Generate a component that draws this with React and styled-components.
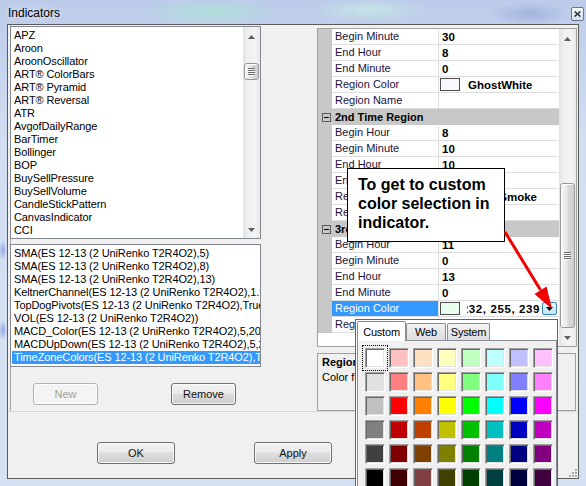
import React from 'react'
import styled, { createGlobalStyle, css } from 'styled-components'

const UI_FONT = `"Liberation Sans", Arial, sans-serif`

const GlobalStyle = createGlobalStyle`
  html, body { margin: 0; padding: 0; background: #ffffff; }
  body { font-family: ${UI_FONT}; font-size: 11px; color: #000; }
  *, *::before, *::after { box-sizing: border-box; }
`

const indicators = [
  'APZ', 'Aroon', 'AroonOscillator', 'ART® ColorBars', 'ART® Pyramid', 'ART® Reversal',
  'ATR', 'AvgofDailyRange', 'BarTimer', 'Bollinger', 'BOP', 'BuySellPressure',
  'BuySellVolume', 'CandleStickPattern', 'CanvasIndicator', 'CCI',
]

const applied = [
  'SMA(ES 12-13 (2 UniRenko T2R4O2),5)',
  'SMA(ES 12-13 (2 UniRenko T2R4O2),8)',
  'SMA(ES 12-13 (2 UniRenko T2R4O2),13)',
  'KeltnerChannel(ES 12-13 (2 UniRenko T2R4O2),1.5,20)',
  'TopDogPivots(ES 12-13 (2 UniRenko T2R4O2),True)',
  'VOL(ES 12-13 (2 UniRenko T2R4O2))',
  'MACD_Color(ES 12-13 (2 UniRenko T2R4O2),5,20,30)',
  'MACDUpDown(ES 12-13 (2 UniRenko T2R4O2),5,20,30)',
  'TimeZoneColors(ES 12-13 (2 UniRenko T2R4O2),True)',
]

const properties = [
  { name: 'Begin Minute', value: '30' },
  { name: 'End Hour', value: '8' },
  { name: 'End Minute', value: '0' },
  { name: 'Region Color', color: '#f8f8ff', value: 'GhostWhite' },
  { name: 'Region Name', value: '' },
  { category: '2nd Time Region' },
  { name: 'Begin Hour', value: '8' },
  { name: 'Begin Minute', value: '10' },
  { name: 'End Hour', value: '10' },
  { name: 'End Minute', value: '30' },
  { name: 'Region Color', color: '#f5f5f5', value: 'WhiteSmoke' },
  { name: 'Region Name', value: '' },
  { category: '3rd Time Region' },
  { name: 'Begin Hour', value: '11' },
  { name: 'Begin Minute', value: '0' },
  { name: 'End Hour', value: '13' },
  { name: 'End Minute', value: '0' },
  { name: 'Region Color', color: 'rgb(232, 255, 239)', value: '232, 255, 239', selected: true },
  { name: 'Region Name', value: '' },
]

const palette = [
  ['#ffffff', '#ffc0c0', '#ffe0c0', '#ffffc0', '#c0ffc0', '#c0ffff', '#c0c0ff', '#ffc0ff'],
  ['#e0e0e0', '#ff8080', '#ffc080', '#ffff80', '#80ff80', '#80ffff', '#8080ff', '#ff80ff'],
  ['#c0c0c0', '#ff0000', '#ff8000', '#ffff00', '#00ff00', '#00ffff', '#0000ff', '#ff00ff'],
  ['#808080', '#c00000', '#c04000', '#c0c000', '#00c000', '#00c0c0', '#0000c0', '#c000c0'],
  ['#404040', '#800000', '#804000', '#808000', '#008000', '#008080', '#000080', '#800080'],
  ['#000000', '#400000', '#804040', '#404000', '#004000', '#004040', '#000040', '#400040'],
]

function App() {
  return (
    <>
      <GlobalStyle />
      <Window>
        <TitleBar>
          <Title>Indicators</Title>
          <CloseBox>
            <svg width="7" height="6" viewBox="0 0 7 6">
              <path d="M0.5 0.5 L6.5 5.5 M6.5 0.5 L0.5 5.5" stroke="#2b3445" strokeWidth="1.6" />
            </svg>
          </CloseBox>
        </TitleBar>

        <Client>
          <Body>
            <LeftPane>
              <ListBox $height={213}>
                <ListItems>
                  {indicators.map(name => <ListItem key={name}>{name}</ListItem>)}
                </ListItems>
                <VScroll thumbTop={19} thumbSize={17} />
              </ListBox>
              <ListBox $height={123} $gap={5}>
                <ListItems>
                  {applied.map((name, i) => (
                    <ListItem key={name} $selected={i === applied.length - 1}>{name}</ListItem>
                  ))}
                </ListItems>
              </ListBox>
              <ButtonRow>
                <Button $w={65} disabled>New</Button>
                <Button $w={65}>Remove</Button>
              </ButtonRow>
            </LeftPane>

            <RightPane>
              <Grid>
                <GridRows>
                  {properties.map((p, i) => p.category ? (
                    <CategoryRow key={i}>
                      <Expander><MinusBar /></Expander>
                      <CategoryLabel>{p.category}</CategoryLabel>
                    </CategoryRow>
                  ) : (
                    <PropRow key={i}>
                      <Gutter />
                      <NameCell $selected={p.selected}>{p.name}</NameCell>
                      <ValueCell $swatch={!!p.color}>
                        {p.color && <Swatch $color={p.color} />}
                        {p.selected ? (
                          <>
                            <EditBox><span>{p.value}</span></EditBox>
                            <DropButton>
                              <svg width="7" height="4" viewBox="0 0 7 4"><path d="M0 0 H7 L3.5 4 Z" fill="#000" /></svg>
                            </DropButton>
                          </>
                        ) : p.color ? (
                          <ValueText>{p.value}</ValueText>
                        ) : p.value}
                      </ValueCell>
                    </PropRow>
                  ))}
                </GridRows>
                <VScroll thumbTop={137} thumbSize={145} />
              </Grid>
              <DescPanel>
                <DescTitle>Region Color</DescTitle>
                <DescText>Color for the 3rd time region.</DescText>
              </DescPanel>
            </RightPane>
          </Body>

          <Footer>
            <Button $w={78}>OK</Button>
            <Button $w={78}>Apply</Button>
            <Grip>
              <svg width="11" height="11" viewBox="0 0 11 11">
                {[[8, 2], [8, 5], [5, 5], [8, 8], [5, 8], [2, 8]].map(([x, y]) => (
                  <g key={`${x}-${y}`}>
                    <rect x={x + 1} y={y + 1} width="2" height="2" fill="#ffffff" />
                    <rect x={x} y={y} width="2" height="2" fill="#a8a8a8" />
                  </g>
                ))}
              </svg>
            </Grip>
          </Footer>
        </Client>

        <Callout>
          To get to custom<br />color selection in<br />indicator.
        </Callout>
        <Arrow width="62" height="90" viewBox="0 0 62 90">
          <line x1="5" y1="7" x2="40.5" y2="65" stroke="#f20000" strokeWidth="3" />
          <polygon points="52,84 34.5,68.9 46.5,61.6" fill="#f20000" />
        </Arrow>

        <ColorDropdown>
          <TabStrip>
            <Tab $w={49} $active>Custom</Tab>
            <Tab $w={40}>Web</Tab>
            <Tab $w={43} $gap={1}>System</Tab>
          </TabStrip>
          <TabPanel>
            <SwatchGrid>
              {palette.flat().map((c, i) => (
                <ColorCell key={i} $color={c} $focused={i === 0} />
              ))}
            </SwatchGrid>
          </TabPanel>
        </ColorDropdown>
      </Window>
    </>
  )
}

function VScroll({ thumbTop, thumbSize }) {
  return (
    <ScrollBar>
      <ScrollButton $up>
        <svg width="7" height="4" viewBox="0 0 7 4"><path d="M0 4 L3.5 0 L7 4 Z" fill="#5e5e5e" /></svg>
      </ScrollButton>
      <ScrollLane>
        <Thumb $top={thumbTop} $size={thumbSize}>
          <svg width="7" height="8" viewBox="0 0 7 8">
            {[0, 2, 4, 6].map(y => (
              <g key={y}>
                <rect x="0" y={y} width="7" height="1" fill="#6a6a6a" />
                <rect x="0" y={y + 1} width="7" height="1" fill="#fbfbfb" />
              </g>
            ))}
          </svg>
        </Thumb>
      </ScrollLane>
      <ScrollButton>
        <svg width="7" height="4" viewBox="0 0 7 4"><path d="M0 0 H7 L3.5 4 Z" fill="#5e5e5e" /></svg>
      </ScrollButton>
    </ScrollBar>
  )
}

export default App

const Window = styled.div`
  position: relative;
  width: 586px;
  height: 486px;
  overflow: hidden;
  display: flex;
  flex-direction: column;
  padding: 0 7px 7px;
  background:
    radial-gradient(ellipse 70px 14px at 210px 12px, rgba(170, 228, 214, 0.75), transparent),
    radial-gradient(ellipse 60px 12px at 370px 10px, rgba(200, 238, 230, 0.7), transparent),
    radial-gradient(ellipse 40px 12px at 530px 14px, rgba(140, 160, 215, 0.55), transparent),
    radial-gradient(ellipse 4px 10px at 3px 250px, rgba(110, 130, 225, 0.6), transparent),
    radial-gradient(ellipse 4px 10px at 3px 330px, rgba(110, 130, 225, 0.6), transparent),
    linear-gradient(180deg, #bccbe9 0%, #d2dff2 30%, #d4e1f3 100%);
`

const TitleBar = styled.div`
  height: 24px;
  flex: none;
  display: flex;
  align-items: flex-start;
  justify-content: space-between;
  padding-left: 1px;
`

const Title = styled.span`
  margin-top: 6px;
  font-size: 12px;
  line-height: 14px;
  color: #000;
  text-shadow: 0 0 6px rgba(255, 255, 255, 0.9);
`

const CloseBox = styled.div`
  width: 13px;
  height: 14px;
  margin: 7px -5px 0 0;
  border: 1px solid #67758c;
  border-radius: 2px;
  background: linear-gradient(#f8fafd, #d5dfeb);
  display: flex;
  align-items: center;
  justify-content: center;
`

const Client = styled.div`
  flex: 1;
  display: flex;
  flex-direction: column;
  border: 1px solid #5a5a5a;
  background: #f0f0f0;
`

const Body = styled.div`
  flex: none;
  height: 386px;
  display: flex;
  padding-left: 2px;
`

const LeftPane = styled.div`
  width: 307px;
  flex: none;
  display: flex;
  flex-direction: column;
  padding-top: 1px;
  box-shadow: inset 1px 0 0 #a8a8a8;
`

const ListBox = styled.div`
  width: 251px;
  height: ${p => p.$height}px;
  margin-top: ${p => p.$gap || 0}px;
  flex: none;
  display: flex;
  border: 1px solid #828790;
  background: #fff;
  overflow: hidden;
`

const ListItems = styled.div`
  flex: 1;
  min-width: 0;
  padding-top: 2px;
`

const ListItem = styled.div`
  height: 13px;
  line-height: 13px;
  margin-left: 1px;
  padding-left: 2px;
  white-space: nowrap;
  overflow: hidden;
  letter-spacing: -0.1px;
  ${p => p.$selected && css`
    background: #3399ff;
    color: #fff;
  `}
`

const ScrollBar = styled.div`
  width: 17px;
  flex: none;
  display: flex;
  flex-direction: column;
  background: linear-gradient(to right, #e3e3e3, #eeeeee 25%, #f4f4f4 70%, #e9e9e9);
`

const ScrollButton = styled.div`
  height: 17px;
  flex: none;
  display: flex;
  align-items: center;
  justify-content: center;
  padding-top: ${p => (p.$up ? 3 : 1)}px;
`

const ScrollLane = styled.div`
  flex: 1;
  display: flex;
  flex-direction: column;
`

const Thumb = styled.div`
  margin: ${p => p.$top}px 1px 0;
  height: ${p => p.$size}px;
  flex: none;
  border: 1px solid #979797;
  border-radius: 3px;
  background: linear-gradient(to right, #f5f5f5, #e9e9e9 45%, #d9d9d9 55%, #d0d0d0);
  box-shadow: inset 1px 1px 0 #ffffff;
  display: flex;
  align-items: center;
  justify-content: center;
`

const ButtonRow = styled.div`
  display: flex;
  gap: 73px;
  margin-top: 16px;
  padding-left: 23px;
`

const Button = styled.div`
  width: ${p => p.$w}px;
  height: 22px;
  flex: none;
  display: flex;
  align-items: center;
  justify-content: center;
  border: 1px solid #707070;
  border-radius: 3px;
  background: linear-gradient(#f2f2f2 0%, #ebebeb 45%, #dddddd 50%, #cfcfcf 100%);
  box-shadow: inset 0 0 0 1px rgba(255, 255, 255, 0.75);
  color: #111;
  ${p => p.disabled && css`
    border-color: #adb2b5;
    background: #f4f4f4;
    color: #a0a0a0;
  `}
`

const RightPane = styled.div`
  width: 260px;
  flex: none;
  display: flex;
  flex-direction: column;
  padding-top: 3px;
`

const Grid = styled.div`
  height: 319px;
  flex: none;
  display: flex;
  border: 1px solid #a0a0a0;
  background: #fff;
`

const GridRows = styled.div`
  flex: 1;
  display: flex;
  flex-direction: column;
`

const PropRow = styled.div`
  display: grid;
  grid-template-columns: 14px 107px 120px;
  height: 16px;
  flex: none;
`

const Gutter = styled.div`
  background: #c8c8c8;
`

const NameCell = styled.div`
  padding-left: 3px;
  line-height: 15px;
  border-right: 1px solid #dcdcdc;
  border-bottom: 1px solid #dcdcdc;
  color: #20123a;
  white-space: nowrap;
  overflow: hidden;
  ${p => p.$selected && css`
    background: #3399ff;
    color: #fff;
  `}
`

const ValueCell = styled.div`
  display: flex;
  align-items: center;
  padding-left: ${p => (p.$swatch ? 1 : 3)}px;
  border-bottom: 1px solid #dcdcdc;
  font-size: 11.5px;
  font-weight: bold;
  white-space: nowrap;
  overflow: hidden;
`

const Swatch = styled.div`
  width: 20px;
  height: 13px;
  flex: none;
  border: 1px solid #4d4d4d;
  background: ${p => p.$color};
`

const ValueText = styled.span`
  margin-left: 8px;
`

const EditBox = styled.div`
  width: 73px;
  flex: none;
  margin-left: 7px;
  display: flex;
  justify-content: flex-end;
  overflow: hidden;
  letter-spacing: 0.6px;
`

const DropButton = styled.div`
  width: 15px;
  height: 13px;
  flex: none;
  margin-left: 2px;
  border: 1px solid #3c7fb1;
  border-radius: 2px;
  background: linear-gradient(#e5f4fc, #c4e5f6);
  display: flex;
  align-items: center;
  justify-content: center;
`

const CategoryRow = styled.div`
  display: grid;
  grid-template-columns: 14px 1fr;
  align-items: center;
  height: 16px;
  flex: none;
  background: #c8c8c8;
  font-weight: bold;
`

const Expander = styled.div`
  width: 9px;
  height: 9px;
  margin-left: 4px;
  border: 1px solid #5a5a5a;
  display: flex;
  align-items: center;
  justify-content: center;
`

const MinusBar = styled.div`
  width: 5px;
  height: 1px;
  background: #000;
`

const CategoryLabel = styled.span`
  padding-left: 3px;
  white-space: nowrap;
`

const DescPanel = styled.div`
  width: 259px;
  height: 58px;
  flex: none;
  margin-top: 6px;
  padding: 2px 4px;
  border: 1px solid #a0a0a0;
  line-height: 13px;
  overflow: hidden;
`

const DescTitle = styled.div`
  font-weight: bold;
  white-space: nowrap;
`

const DescText = styled.div`
  margin-top: 2px;
  white-space: nowrap;
`

const Footer = styled.div`
  flex: 1;
  display: flex;
  align-items: flex-start;
  gap: 79px;
  padding: 30px 0 0 89px;
  border-top: 1px solid #d8d8d8;
`

const Grip = styled.div`
  margin-left: auto;
  align-self: flex-end;
  display: flex;
`

const Callout = styled.div`
  position: absolute;
  left: 347px;
  top: 168px;
  width: 158px;
  height: 74px;
  padding: 6px 0 0 10px;
  border: 1px solid #000;
  background: #fff;
  font-size: 16px;
  font-weight: bold;
  line-height: 19px;
`

const Arrow = styled.svg`
  position: absolute;
  left: 500px;
  top: 225px;
`

const ColorDropdown = styled.div`
  position: absolute;
  left: 355px;
  top: 319px;
  width: 203px;
  height: 172px;
  padding: 1px 0 0 1px;
  border: 1px solid #646464;
  background: #fff;
  display: flex;
  flex-direction: column;
`

const TabStrip = styled.div`
  height: 19px;
  flex: none;
  display: flex;
  align-items: flex-end;
  position: relative;
  z-index: 1;
`

const Tab = styled.div`
  width: ${p => p.$w}px;
  height: ${p => (p.$active ? 20 : 17)}px;
  margin-left: ${p => p.$gap || 0}px;
  margin-bottom: ${p => (p.$active ? -1 : 0)}px;
  flex: none;
  display: flex;
  align-items: center;
  justify-content: center;
  border: 1px solid #898c95;
  border-bottom: none;
  border-radius: 2px 2px 0 0;
  letter-spacing: -0.2px;
  background: ${p => (p.$active ? '#ffffff' : 'linear-gradient(#f3f3f3, #dcdcdc)')};
`

const TabPanel = styled.div`
  width: 200px;
  flex: 1;
  border: 1px solid #898c95;
  background: #f0f0f0;
`

const SwatchGrid = styled.div`
  display: grid;
  grid-template-columns: repeat(8, 20px);
  grid-auto-rows: 20px;
  gap: 4px;
  padding: 7px 0 0 7px;
`

const ColorCell = styled.div`
  background: ${p => p.$color};
  border: 1px solid;
  border-color: #a0a0a0 #ffffff #ffffff #a0a0a0;
  box-shadow: inset 1px 1px 0 #696969, inset -1px -1px 0 #e3e3e3;
  ${p => p.$focused && css`
    outline: 1px dotted #000;
    outline-offset: 2px;
  `}
`
